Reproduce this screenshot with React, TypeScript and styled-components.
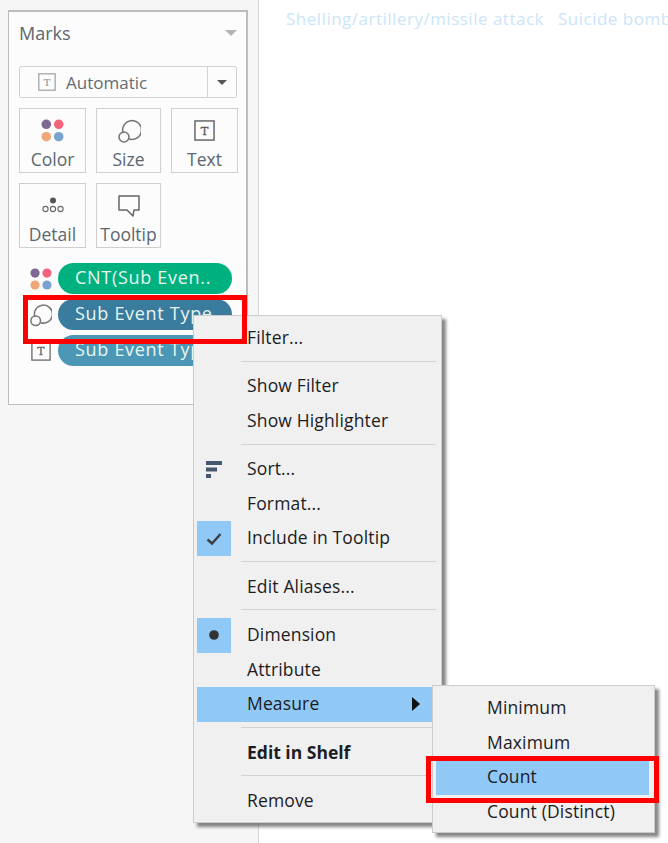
import React from 'react'
import styled, { createGlobalStyle } from 'styled-components'

const GlobalStyle = createGlobalStyle`
  html, body {
    margin: 0;
    padding: 0;
    background: #ffffff;
  }
  body {
    font-family: "Open Sans", "Noto Sans", "Liberation Sans", sans-serif;
  }
`;

const Page = styled.div`
  position: relative;
  width: 668px;
  height: 843px;
  overflow: hidden;
  display: flex;
  background: #ffffff;
`;

const Sidebar = styled.aside`
  width: 259px;
  box-sizing: border-box;
  flex-shrink: 0;
  padding: 10px 10px 0 8px;
  background: #f6f6f6;
  border-right: 1px solid #d4d4d4;
`;

const Card = styled.section`
  height: 395px;
  box-sizing: border-box;
  padding: 9px 9px 0 10px;
  background: #fcfcfc;
  border: 1px solid #bdbdbd;
  border-top-width: 2px;
  border-right-width: 2px;
`;

const CardHeader = styled.div`
  display: flex;
  align-items: center;
  justify-content: space-between;
  height: 24px;
  margin-bottom: 21px;
  font-size: 18px;
  color: #5b6770;
`;

const Caret = styled.span<{ color: string, size: number }>`
  width: 0;
  height: 0;
  border-left: ${props => props.size}px solid transparent;
  border-right: ${props => props.size}px solid transparent;
  border-top: ${props => props.size}px solid ${props => props.color};
`;

const TypeSelect = styled.div`
  display: flex;
  height: 32px;
  box-sizing: border-box;
  border: 1px solid #d2d2d2;
  border-radius: 2px;
  margin-bottom: 10px;
  font-size: 17px;
  color: #646c72;
`;

const TypeLabel = styled.div`
  flex: 1;
  display: flex;
  align-items: center;
  gap: 10px;
  padding-left: 18px;
  border-right: 1px solid #d2d2d2;
`;

const TypeCaret = styled.div`
  width: 28px;
  display: flex;
  align-items: center;
  justify-content: center;
`;

const MarkGrid = styled.div`
  display: grid;
  grid-template-columns: 67px 65px 67px;
  grid-auto-rows: 65px;
  gap: 10px;
  margin-bottom: 15px;
`;

const MarkButton = styled.div`
  display: flex;
  flex-direction: column;
  align-items: center;
  box-sizing: border-box;
  padding-top: 5px;
  border: 1px solid #cfcfcf;
  font-size: 17.5px;
  color: #5b6770;
`;

const MarkIcon = styled.div`
  height: 33px;
  flex-shrink: 0;
  display: flex;
  align-items: center;
  justify-content: center;
`;

const PillList = styled.div`
  display: flex;
  flex-direction: column;
  gap: 5px;
`;

const PillRow = styled.div`
  display: flex;
  align-items: center;
  gap: 6px;
  margin-left: 10px;
`;

const PillIcon = styled.div`
  width: 23px;
  display: flex;
  align-items: center;
  justify-content: center;
`;

const Pill = styled.div<{ color: string }>`
  width: 174px;
  height: 31px;
  flex-shrink: 0;
  box-sizing: border-box;
  padding-left: 17px;
  border-radius: 16px;
  background: ${props => props.color};
  color: #e8f6f2;
  font-size: 18px;
  letter-spacing: 0.7px;
  line-height: 29px;
  white-space: nowrap;
  overflow: hidden;
`;

const Main = styled.main`
  flex: 1;
  min-width: 0;
  overflow: hidden;
  display: flex;
  gap: 14px;
  padding: 9px 0 0 27px;
  font-size: 17px;
  letter-spacing: 0.5px;
  line-height: 20px;
  color: #cbe5f8;
  white-space: nowrap;
`;

const Menu = styled.div<{ top: number, left: number, width: number }>`
  position: absolute;
  top: ${props => props.top}px;
  left: ${props => props.left}px;
  width: ${props => props.width}px;
  box-sizing: border-box;
  padding: 5px 5px 3px 3px;
  background: #f0f0f0;
  border: 1px solid #cccccc;
  box-shadow: 4px 4px 3px rgba(70, 70, 70, 0.65);
`;

const Item = styled.div<{ active?: boolean, bold?: boolean, indent: number }>`
  position: relative;
  height: 34.6px;
  box-sizing: border-box;
  padding-left: ${props => props.indent}px;
  font-size: 17.5px;
  letter-spacing: ${props => props.bold ? 0 : 0.15}px;
  line-height: 33px;
  font-weight: ${props => props.bold ? 700 : 400};
  color: #1c1c24;
  white-space: nowrap;
  background: ${props => props.active ? '#90c8f6' : 'transparent'};
`;

const ItemIcon = styled.div<{ checked?: boolean }>`
  position: absolute;
  left: 0;
  top: 0;
  width: 34px;
  height: 34.5px;
  display: flex;
  align-items: center;
  justify-content: center;
  background: ${props => props.checked ? '#90c8f6' : 'transparent'};
`;

const Separator = styled.div`
  height: 1px;
  margin: 5px 0 7.75px 44px;
  background: #d2d2d2;
`;

const Arrow = styled.span`
  position: absolute;
  right: 16px;
  top: 10px;
  width: 0;
  height: 0;
  border-top: 7px solid transparent;
  border-bottom: 7px solid transparent;
  border-left: 8px solid #111111;
`;

const Callout = styled.div<{ top: number, left: number, width: number, height: number }>`
  position: absolute;
  top: ${props => props.top}px;
  left: ${props => props.left}px;
  width: ${props => props.width}px;
  height: ${props => props.height}px;
  box-sizing: border-box;
  border: 5px solid #fe0000;
`;

const ColorIcon = ({ size }: { size: number }) => (
  <svg width={size} height={size} viewBox="0 0 24 24">
    <circle cx="5.5" cy="5.5" r="5" fill="#7e6795" />
    <circle cx="18.5" cy="5.5" r="5" fill="#f3647c" />
    <circle cx="5.5" cy="18.5" r="5" fill="#f0a679" />
    <circle cx="18.5" cy="18.5" r="5" fill="#79a3cf" />
  </svg>
)

const SizeIcon = () => (
  <svg width="24" height="24" viewBox="0 0 24 24" fill="none" stroke="#777777" strokeWidth="1.6">
    <path d="M6.2 14.2 A9.4 9.4 0 1 1 12.2 20" />
    <circle cx="7" cy="18" r="5" />
  </svg>
)

const TextIcon = ({ size, color }: { size: number, color: string }) => (
  <svg width={size} height={size} viewBox="0 0 22 22">
    <rect x="1" y="1" width="20" height="20" fill="none" stroke={color} strokeWidth="1.4" />
    <text x="11" y="15.5" textAnchor="middle" fontFamily="'DejaVu Serif', serif" fontWeight="400" fontSize="12" stroke={color} strokeWidth="0.3" fill={color}>T</text>
  </svg>
)

const DetailIcon = () => (
  <svg width="24" height="20" viewBox="0 0 24 20">
    <circle cx="12" cy="4.5" r="3" fill="#555555" />
    <g fill="none" stroke="#666666" strokeWidth="1.1">
      <circle cx="4.5" cy="13" r="2.6" />
      <circle cx="12" cy="13" r="2.6" />
      <circle cx="19.5" cy="13" r="2.6" />
    </g>
  </svg>
)

const TooltipIcon = () => (
  <svg width="24" height="24" viewBox="0 0 24 24" fill="none" stroke="#666666" strokeWidth="1.5">
    <path d="M2 2 H22 V16 H17 L16 22 L10 16 H2 Z" strokeLinejoin="round" />
  </svg>
)

const SortIcon = () => (
  <svg width="17" height="18" viewBox="0 0 17 18" fill="#46566c">
    <rect x="0" y="0" width="16" height="4" />
    <rect x="0" y="6.5" width="11" height="4" />
    <rect x="0" y="13" width="5" height="4" />
  </svg>
)

const CheckIcon = () => (
  <svg width="16" height="14" viewBox="0 0 16 14" fill="none" stroke="#3c3c46" strokeWidth="2.4">
    <path d="M1.5 7.5 L6 11.5 L14.5 2" />
  </svg>
)

const DotIcon = () => (
  <svg width="10" height="10" viewBox="0 0 10 10">
    <circle cx="5" cy="5" r="4.8" fill="#333333" />
  </svg>
)

const markButtons = [
  { label: 'Color', icon: <ColorIcon size={23} /> },
  { label: 'Size', icon: <SizeIcon /> },
  { label: 'Text', icon: <TextIcon size={21} color="#555555" /> },
  { label: 'Detail', icon: <DetailIcon /> },
  { label: 'Tooltip', icon: <TooltipIcon /> },
]

export default function App() {
  return (
    <Page>
      <GlobalStyle />
      <Sidebar>
        <Card>
          <CardHeader>
            Marks
            <Caret color="#b4b4b4" size={6} />
          </CardHeader>
          <TypeSelect>
            <TypeLabel>
              <TextIcon size={18} color="#9a9a9a" />
              Automatic
            </TypeLabel>
            <TypeCaret>
              <Caret color="#555555" size={5} />
            </TypeCaret>
          </TypeSelect>
          <MarkGrid>
            {markButtons.map(button => (
              <MarkButton key={button.label}>
                <MarkIcon>{button.icon}</MarkIcon>
                {button.label}
              </MarkButton>
            ))}
          </MarkGrid>
          <PillList>
            <PillRow>
              <PillIcon><ColorIcon size={22} /></PillIcon>
              <Pill color="#00b180">CNT(Sub Even..</Pill>
            </PillRow>
            <PillRow>
              <PillIcon><SizeIcon /></PillIcon>
              <Pill color="#3a7c9e">Sub Event Type</Pill>
            </PillRow>
            <PillRow>
              <PillIcon><TextIcon size={20} color="#666666" /></PillIcon>
              <Pill color="#4b97b5">Sub Event Type</Pill>
            </PillRow>
          </PillList>
        </Card>
      </Sidebar>

      <Main>
        <span>Shelling/artillery/missile attack</span>
        <span>Suicide bomb</span>
      </Main>

      <Menu top={315} left={193} width={249}>
        <Item indent={50}>Filter...</Item>
        <Separator />
        <Item indent={50}>Show Filter</Item>
        <Item indent={50}>Show Highlighter</Item>
        <Separator />
        <Item indent={50}><ItemIcon><SortIcon /></ItemIcon>Sort...</Item>
        <Item indent={50}>Format...</Item>
        <Item indent={50}><ItemIcon checked><CheckIcon /></ItemIcon>Include in Tooltip</Item>
        <Separator />
        <Item indent={50}>Edit Aliases...</Item>
        <Separator />
        <Item indent={50}><ItemIcon checked><DotIcon /></ItemIcon>Dimension</Item>
        <Item indent={50}>Attribute</Item>
        <Item indent={50} active>Measure<Arrow /></Item>
        <Separator />
        <Item indent={50} bold>Edit in Shelf</Item>
        <Separator />
        <Item indent={50}>Remove</Item>
      </Menu>

      <Menu top={685} left={432} width={223}>
        <Item indent={51}>Minimum</Item>
        <Item indent={51}>Maximum</Item>
        <Item indent={51} active>Count</Item>
        <Item indent={51}>Count (Distinct)</Item>
      </Menu>

      <Callout top={295} left={23} width={224} height={49} />
      <Callout top={756} left={426} width={233} height={47} />
    </Page>
  )
}
